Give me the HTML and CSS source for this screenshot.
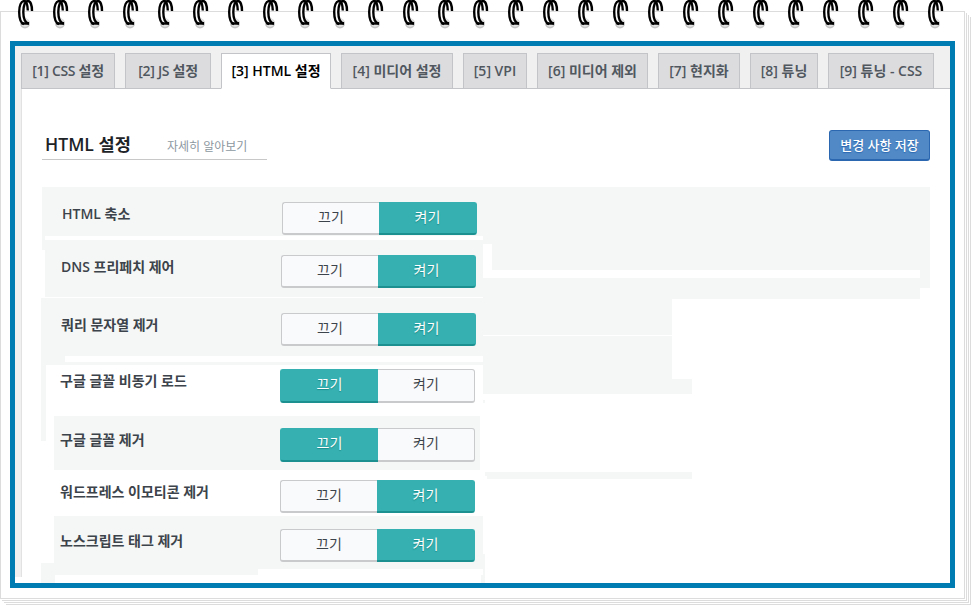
FILE: index.html
```html
<!DOCTYPE html>
<html lang="ko">
<head>
    <meta charset="UTF-8">
    <meta name="viewport" content="width=device-width, initial-scale=1.0">
    <title>HTML 설정</title>
    <link rel="stylesheet" href="styles.css">
</head>
<body>
    <div class="paper">
        <!-- spiral binding -->
        <svg class="rings" width="971" height="32">
            <defs>
                <pattern id="ring" width="35" height="32" patternUnits="userSpaceOnUse">
                    <circle cx="25" cy="23.500" r="5" fill="#c6c6c6"/>
                    <circle cx="25" cy="22.500" r="4.200" fill="#e6e6e6"/>
                    <path d="M24 1C17 5 18 20 23 23L28 22C23 17 23 6 28 1Z" fill="#fff"/>
                    <path d="M27.800 10.500C27.500 4 26.500 1 24.500 1C21 1 19.200 6 19.200 12C19.200 18 20.500 23 24 24" fill="none" stroke="#000" stroke-width="2.400"/>
                    <path d="M32 11C32 4 30 1 28 1C25 1 23.300 6 23.300 12C23.300 18 24.500 23 29 23.500" fill="none" stroke="#000" stroke-width="2.400"/>
                    <path d="M21.500 23.500H29" stroke="#000" stroke-width="2.400"/>
                </pattern>
            </defs>
            <rect width="945" height="32" fill="url(#ring)"/>
        </svg>

        <div class="frame">
            <nav class="tabs">
                <a class="tab tight">[1] CSS 설정</a>
                <a class="tab tight">[2] JS 설정</a>
                <a class="tab active">[3] HTML 설정</a>
                <a class="tab">[4] 미디어 설정</a>
                <a class="tab">[5] VPI</a>
                <a class="tab">[6] 미디어 제외</a>
                <a class="tab">[7] 현지화</a>
                <a class="tab">[8] 튜닝</a>
                <a class="tab">[9] 튜닝 - CSS</a>
            </nav>

            <div class="panel">
                <div class="panel-head">
                    <div class="title">
                        <h3>HTML 설정</h3>
                        <a class="more">자세히 알아보기</a>
                    </div>
                    <button class="save">변경 사항 저장</button>
                </div>

                <div class="settings">
                    <!-- row shading -->
                    <svg class="shade" width="890" height="396" viewBox="41 187 890 396" shape-rendering="crispEdges">
                        <path fill="#f5f7f6" d="M42 187H930V288H920V299H672V379H692V394H483V365H46V441H41V298H45V250H42Z
                            M54 416H480V470H54Z M485 472H692V479H487V476H485Z
                            M54 516H483V569H258V575H55V583H41V563H54Z M483 554H485V583H481V575H483Z M483 400H485V403H483Z"/>
                        <path fill="#fff" d="M45 236H483V240H45Z M45 297H483V298H45Z M65 356H483V362H65Z
                            M483 244H492V270H920V278H483Z M483 335H672V336H483Z"/>
                    </svg>
                    <div class="row r1"><label>HTML 축소</label><div class="toggle"><span>끄기</span><span class="on">켜기</span></div></div>
                    <div class="row r2"><label>DNS 프리페치 제어</label><div class="toggle"><span>끄기</span><span class="on">켜기</span></div></div>
                    <div class="row r3"><label>쿼리 문자열 제거</label><div class="toggle"><span>끄기</span><span class="on">켜기</span></div></div>
                    <div class="row r4"><label>구글 글꼴 비동기 로드</label><div class="toggle tall"><span class="on">끄기</span><span>켜기</span></div></div>
                    <div class="row r5"><label>구글 글꼴 제거</label><div class="toggle tall"><span class="on">끄기</span><span>켜기</span></div></div>
                    <div class="row r6"><label>워드프레스 이모티콘 제거</label><div class="toggle"><span>끄기</span><span class="on">켜기</span></div></div>
                    <div class="row r7"><label>노스크립트 태그 제거</label><div class="toggle"><span>끄기</span><span class="on">켜기</span></div></div>
                </div>
            </div>
        </div>
    </div>
</body>
</html>
```
FILE: styles.css
```css
* { box-sizing: border-box; }
body { margin: 0; height: 605px; overflow: hidden; background: #fff; font-family: "Open Sans", "Noto Sans CJK KR", sans-serif; }

.paper { width: 965px; height: 588px; margin-top: 11px; padding: 29px 9px 0; border: 1px solid #dcdcdc; background: #fff;
    box-shadow: 1px 1px 0 #fff, 2px 2px 0 #dcdcdc, 3px 3px 0 #fff, 4px 4px 0 #dcdcdc, 5px 5px 0 #fff, 6px 6px 0 #dcdcdc; }
.rings { position: absolute; top: 0; left: 0; }

.frame { width: 945px; height: 547px; border: 5px solid #007cb2; background: #fff; }
.tabs { display: grid; grid-template-columns: 94px 86px 110px 112px 64px 111px 82px 68px 106px; gap: 10px; height: 43px; padding: 7px 0 0 6px; background: linear-gradient(#c3c4c7, #c3c4c7) 6px 100% / 100% 1px no-repeat #f0f0f0; }
.tab { height: 36px; border: 1px solid #c3c4c7; background: #dcdcde; color: #50575e; font-size: 14px; font-weight: 600; line-height: 33px; text-align: center; white-space: nowrap; }
.tab.tight { letter-spacing: -0.3px; }
.tab.active { border-bottom-color: #fff; background: #fff; color: #000; }

.panel { height: 494px; padding: 0 20px 0 27px; background: linear-gradient(90deg, #f0f0f0 6px, #e2e2e2 6px) 0 0 / 7px 488px no-repeat; }
.panel-head { display: flex; justify-content: space-between; height: 98px; padding-top: 41px; }
.title { display: flex; align-items: center; width: 225px; height: 30px; padding-left: 3px; border-bottom: 1px solid #c8c8c8; }
.title h3 { width: 122px; margin: 0; color: #1d2327; font-size: 17.6px; font-weight: 600; line-height: 28px; white-space: nowrap; padding-bottom: 2px; }
.more { padding-top: 4px; color: #8c979f; font-size: 12px; line-height: 28px; white-space: nowrap; }
.save { width: 101px; height: 31px; padding: 0; border: 1px solid #2a67b0; border-bottom-width: 2px; border-radius: 3px; background: #5089c6; color: #fff; font: 500 13px/28px "Open Sans", "Noto Sans CJK KR", sans-serif; text-shadow: 0 1px 1px #2a67b0; white-space: nowrap; }

.settings { position: relative; }
.shade { position: absolute; top: 0; left: -1px; }
.row { position: relative; display: flex; align-items: flex-start; padding: 15px 0 0 18px; }
.row label { width: 220px; color: #3c434a; font-size: 14px; font-weight: 600; line-height: 24px; white-space: nowrap; }
.r1 { height: 53px; padding-left: 20px; }
.r2 { height: 58px; padding-left: 19px; }
.r3 { height: 56px; padding-left: 19px; }
.r4 { height: 59px; }
.r5 { height: 52px; }
.r6 { height: 49px; }
.r7 { height: 50px; }

.toggle { display: flex; height: 33px; font-size: 14px; line-height: 28px; text-align: center; }
.toggle.tall { height: 34px; }
.toggle span { width: 97px; border: 1px solid #c8cacc; border-bottom-width: 2px; background: #f9fafc; color: #3c434a; }
.toggle span:first-child { border-right: 0; border-radius: 3px 0 0 3px; }
.toggle span:last-child { border-left: 0; border-radius: 0 3px 3px 0; }
.toggle .on { width: 98px; border-color: #36b0b0 #36b0b0 #1c9090; background: #36b0b0; color: #fff; text-shadow: 0 1px 1px #1c8a8a; }
```
